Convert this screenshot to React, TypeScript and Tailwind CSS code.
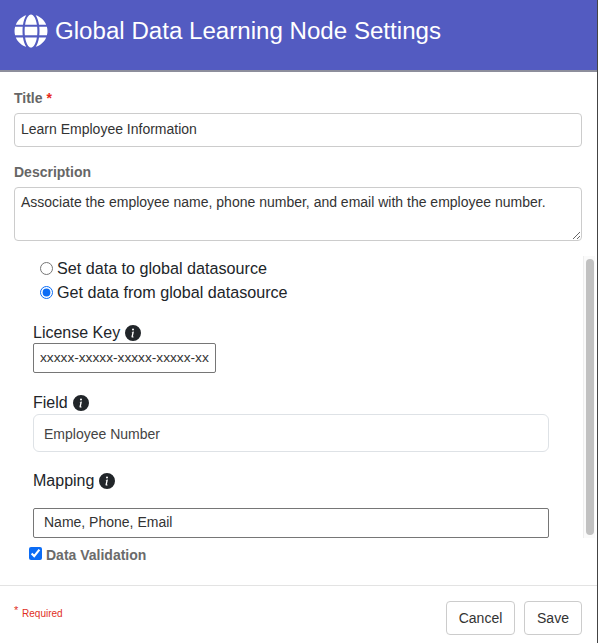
import React from 'react';
import { FaGlobe } from 'react-icons/fa';
import { BsInfoCircleFill } from 'react-icons/bs';

const InfoLabel: React.FC<{ label: string; className?: string }> = ({ label, className = '' }) => (
  <div className={`flex items-center gap-[5px] h-[24px] text-[16px] text-[#212529] ${className}`}>
    <span>{label}</span>
    <BsInfoCircleFill className="w-[16px] h-[16px] text-[#212529]" />
  </div>
);

export default function App() {
  return (
    <div className="w-[598px] h-[643px] flex flex-col bg-white border-r border-[#444] overflow-hidden font-['Liberation_Sans',Arial,sans-serif]">
      {/* Header */}
      <div className="h-[72px] shrink-0 flex items-center gap-[7px] pl-[14px] pb-[7px] bg-[#535bc1] border-b-2 border-[#8d8e9c] text-white">
        <FaGlobe className="w-[34px] h-[34px] -mt-[2px]" />
        <span className="text-[24.12px] leading-none">Global Data Learning Node Settings</span>
      </div>

      <div className="px-[14px] pt-[18px] pr-[15px]">
        <label className="block h-[16px] leading-[16px] text-[14px] font-bold text-[#666]">
          Title <span className="text-[#e8291c]">*</span>
        </label>
        <input
          readOnly
          value="Learn Employee Information"
          className="block w-full h-[34px] mt-[7px] px-[6px] pb-[2px] text-[14px] text-[#333] border border-[#ccc] rounded-[4px] outline-none"
        />
        <label className="block h-[16px] leading-[16px] mt-[17px] text-[14px] font-bold text-[#666]">Description</label>
        <textarea
          readOnly
          value="Associate the employee name, phone number, and email with the employee number."
          className="block w-full h-[54px] mt-[7px] px-[6px] py-[5px] text-[14px] leading-[18px] text-[#333] border border-[#ccc] rounded-[4px] outline-none"
        />
      </div>

      {/* Scroll area */}
      <div className="flex h-[282px] mt-[15px] pr-[2px]">
        <div className="flex-1 min-w-0 overflow-hidden pl-[33px] pr-[34px]">
          <div className="ml-[7px] text-[16.15px] text-[#212529]">
            <label className="flex items-center gap-[4px] h-[24px]">
              <input type="radio" name="mode" readOnly className="w-[13px] h-[13px]" />
              Set data to global datasource
            </label>
            <label className="flex items-center gap-[4px] h-[24px]">
              <input type="radio" name="mode" readOnly defaultChecked className="w-[13px] h-[13px] accent-[#0b6cf5]" />
              Get data from global datasource
            </label>
          </div>

          <InfoLabel label="License Key" className="mt-[17px]" />
          <input
            readOnly
            value="xxxxx-xxxxx-xxxxx-xxxxx-xxxxx"
            className="block w-[183px] h-[30px] -mt-[2px] px-[6px] pb-[1px] text-[13.7px] text-[#333] border border-[#767676] rounded-[2px] outline-none"
          />

          <InfoLabel label="Field" className="mt-[18px]" />
          <input
            readOnly
            value="Employee Number"
            className="block w-full h-[38px] -mt-[1px] px-[10px] pt-[2px] text-[14px] text-[#444] border border-[#dee2e6] rounded-[6px] outline-none"
          />

          <InfoLabel label="Mapping" className="mt-[17px]" />
          <input
            readOnly
            value="Name, Phone, Email"
            className="block w-full h-[30px] mt-[15px] px-[10px] pb-[2px] text-[14px] text-[#333] border border-[#767676] rounded-[2px] outline-none"
          />
        </div>
        <div className="w-[12px] shrink-0 bg-[#fafafa] border-l border-[#eee] py-[3px] flex">
          <div className="w-[8px] mx-auto bg-[#c1c1c1] rounded-full" />
        </div>
      </div>

      <label className="flex items-center gap-[4px] h-[16px] mt-[9px] ml-[29px] text-[14px] font-bold text-[#6b6b6b]">
        <input type="checkbox" readOnly defaultChecked className="w-[13px] h-[13px] mt-[-3px] accent-[#0b6cf5]" />
        Data Validation
      </label>

      {/* Footer */}
      <div className="flex-1 mt-[22px] flex items-start justify-between border-t border-[#e3e3e3] pl-[14px] pr-[15px] pt-[15px]">
        <div className="mt-[2px] text-[10px] text-[#e0301e] leading-[20px]">
          <span className="relative -top-[3px] text-[11px] mr-[1px]">*</span> Required
        </div>
        <div className="flex gap-[9px]">
          <button className="w-[69px] h-[34px] text-[14px] text-[#333] bg-white border border-[#ccc] rounded-[4px]">Cancel</button>
          <button className="w-[58px] h-[34px] text-[14px] text-[#333] bg-white border border-[#ccc] rounded-[4px]">Save</button>
        </div>
      </div>
    </div>
  );
}
